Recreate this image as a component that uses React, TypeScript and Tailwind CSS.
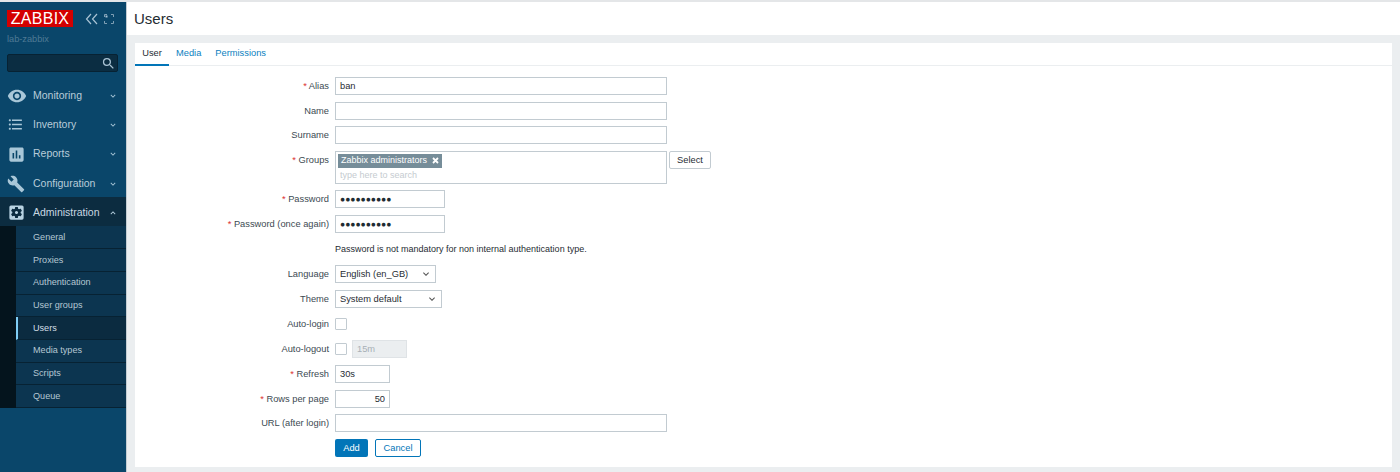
import { ReactNode } from 'react';
import { MdVisibility, MdFormatListBulleted, MdAssessment, MdBuild, MdSettingsApplications, MdSearch, MdKeyboardArrowDown, MdKeyboardArrowUp } from 'react-icons/md';

const menu = [
  { label: 'Monitoring', icon: <MdVisibility size={20} /> },
  { label: 'Inventory', icon: <MdFormatListBulleted size={17} /> },
  { label: 'Reports', icon: <MdAssessment size={19} /> },
  { label: 'Configuration', icon: <MdBuild size={18} /> },
];

const subItems = ['General', 'Proxies', 'Authentication', 'User groups', 'Users', 'Media types', 'Scripts', 'Queue'];

function Sidebar() {
  return (
    <aside className="w-[127px] shrink-0 bg-[#0a466a] border-r border-[#c4cdd3] flex flex-col h-[470px]">
      <div className="flex items-center pl-[7px] pt-[8px]">
        <div className="w-[66px] h-[17px] bg-[#d40000] text-white text-[16px] leading-[17px] text-center tracking-[0.3px]">ZABBIX</div>
        <svg width="14" height="12" viewBox="0 0 14 12" className="ml-[12px]" fill="none" stroke="#a9c3d4" strokeWidth="1.2">
          <path d="M6 1 1.5 6 6 11M12 1 7.5 6 12 11" />
        </svg>
        <svg width="10" height="10" viewBox="0 0 10 10" className="ml-[5px]" fill="none" stroke="#7f9fb4" strokeWidth="1">
          <path d="M.5 3V.5H3M7 .5h2.5V3M9.5 7v2.5H7M3 9.5H.5V7" />
          <path d="M1.5 1.5h2v2h-2z" fill="#a9c3d4" stroke="none" />
        </svg>
      </div>
      <div className="pl-[7px] mt-[6px] text-[9.2px] leading-[12px] text-[#4f7a95]">lab-zabbix</div>
      <div className="mx-[7px] mt-[9px] h-[18px] w-[111px] bg-[#0b2d42] border border-[#072233] rounded-[2px] flex items-center justify-end pr-[1px]">
        <MdSearch size={15} className="text-[#a9c3d4]" />
      </div>
      <nav className="mt-[8px]">
        {menu.map((m) => (
          <div key={m.label} className="h-[29.3px] pt-[2px] flex items-center text-[#a9c7d8]">
            <div className="w-[33px] pl-[7px] flex justify-start">{m.icon}</div>
            <span className="text-[10.5px] flex-1 text-[#b8ccd9]">{m.label}</span>
            <MdKeyboardArrowDown size={10} className="mr-[8px]" />
          </div>
        ))}
        <div className="h-[29.3px] pt-[2px] flex items-center bg-[#0c2c40] text-[#b9d3e2]">
          <div className="w-[33px] pl-[7px]"><MdSettingsApplications size={19} /></div>
          <span className="text-[10.5px] flex-1 text-[#c9d8e2]">Administration</span>
          <MdKeyboardArrowUp size={10} className="mr-[8px]" />
        </div>
        <div className="bg-[#04141d] pl-[16px]">
          {subItems.map((s) => (
            <div
              key={s}
              className={
                s === 'Users'
                  ? 'h-[22.7px] pt-[1px] flex items-center pl-[15px] text-[9.1px] bg-[#0b2b40] text-[#d4dfe6] border-l-2 border-[#7fcdf5] border-b border-b-[#072233]'
                  : 'h-[22.7px] pt-[1px] flex items-center pl-[17px] text-[9.1px] bg-[#0c3550] text-[#b5c7d3] border-b border-[#072233]'
              }
            >
              {s}
            </div>
          ))}
        </div>
      </nav>
    </aside>
  );
}

function Row({ label, required, children, top, shift }: { label?: string; required?: boolean; children: ReactNode; top?: boolean; shift?: boolean }) {
  return (
    <div className={`${top ? 'flex items-start' : 'flex items-center'} ${shift ? 'mt-[1px]' : ''}`}>
      <div className={top ? 'w-[200px] pr-[6px] text-right h-[18px] leading-[18px]' : 'w-[200px] pr-[6px] text-right leading-[18px]'}>
        {required && <span className="text-[#dc3232]">* </span>}
        {label}
      </div>
      {children}
    </div>
  );
}

const box = 'h-[18px] border border-[#c2cbd1] bg-white px-[4px] leading-[16px] text-[#1f2c33]';

function Select({ w, value }: { w: string; value: string }) {
  return (
    <div className={`${box} ${w} flex items-center justify-between`}>
      <span>{value}</span>
      <MdKeyboardArrowDown size={12} className="text-[#555] -mr-[1px]" />
    </div>
  );
}

function Dots() {
  return <span className="text-[8.5px] text-[#1f2c33]">●●●●●●●●●●</span>;
}

export default function App() {
  return (
    <div className="w-[1400px] h-[472px] overflow-hidden bg-[#ebeef0] border-t-2 border-[#e4e6e8] flex font-['Liberation_Sans',Arial,sans-serif] text-[9.3px] text-[#3c4a52]">
      <Sidebar />
      <main className="flex-1 flex flex-col">
        <header className="h-[33px] pt-[2px] bg-white flex items-center pl-[7px] text-[15px] text-[#1f2c33]">Users</header>
        <div className="mx-[8px] mt-[8px] h-[424px] bg-white">
          <div className="flex h-[23px] border-b border-[#ebeef0] text-[9.3px] text-[#0b7fc0]">
            <div className="w-[34px] text-center leading-[21px] text-[#1f2c33] border-b-2 border-[#0275b8] h-[23px]">User</div>
            <div className="ml-[7px] leading-[21px]">Media</div>
            <div className="ml-[14px] leading-[21px]">Permissions</div>
          </div>
          <div className="mt-[11px] flex flex-col gap-[6.7px]">
            <Row label="Alias" required><div className={`${box} w-[332px]`}>ban</div></Row>
            <Row label="Name"><div className={`${box} w-[332px]`} /></Row>
            <Row label="Surname"><div className={`${box} w-[332px]`} /></Row>
            <Row label="Groups" required top>
              <div className="flex gap-[2px]">
                <div className="w-[332px] h-[32.5px] border border-[#c2cbd1] bg-white pl-[2px] pt-[2px]">
                  <div className="inline-flex items-center h-[13.5px] bg-[#768d99] text-white text-[9px] px-[3px]">
                    Zabbix administrators
                    <svg width="7" height="7" viewBox="0 0 7 7" className="ml-[5px]" stroke="white" strokeWidth="1.8">
                      <path d="M1 1l5 5M6 1 1 6" />
                    </svg>
                  </div>
                  <div className="pl-[2px] mt-[1px] leading-[12px] text-[9px] text-[#c5cbd0]">type here to search</div>
                </div>
                <div className="w-[42px] h-[18px] border border-[#c2cbd1] rounded-[2px] bg-white text-center leading-[16px] text-[#1f2c33]">Select</div>
              </div>
            </Row>
            <Row label="Password" required><div className={`${box} w-[110px]`}><Dots /></div></Row>
            <Row label="Password (once again)" required><div className={`${box} w-[110px]`}><Dots /></div></Row>
            <Row><div className="h-[18px] leading-[18px] text-[#1f2c33] text-[9px]">Password is not mandatory for non internal authentication type.</div></Row>
            <Row shift label="Language"><Select w="w-[101px]" value="English (en_GB)" /></Row>
            <Row label="Theme"><Select w="w-[107px]" value="System default" /></Row>
            <Row label="Auto-login"><div className="w-[12px] h-[12px] border border-[#c2cbd1] rounded-[1px] bg-white my-[3px]" /></Row>
            <Row shift label="Auto-logout">
              <div className="w-[12px] h-[12px] border border-[#c2cbd1] rounded-[1px] bg-white" />
              <div className="ml-[5px] w-[55px] h-[18px] bg-[#ebeef0] border border-[#dfe3e6] pl-[4px] leading-[16px] text-[#a8b0b6]">15m</div>
            </Row>
            <Row label="Refresh" required><div className={`${box} w-[55px]`}>30s</div></Row>
            <Row label="Rows per page" required><div className={`${box} w-[55px] text-right`}>50</div></Row>
            <Row label="URL (after login)"><div className={`${box} w-[332px]`} /></Row>
            <Row>
              <div className="flex gap-[7px]">
                <div className="w-[33px] h-[18px] bg-[#0275b8] rounded-[2px] text-white text-center leading-[18px]">Add</div>
                <div className="w-[46px] h-[18px] border border-[#0275b8] rounded-[2px] bg-white text-[#0275b8] text-center leading-[16px]">Cancel</div>
              </div>
            </Row>
          </div>
        </div>
      </main>
    </div>
  );
}
